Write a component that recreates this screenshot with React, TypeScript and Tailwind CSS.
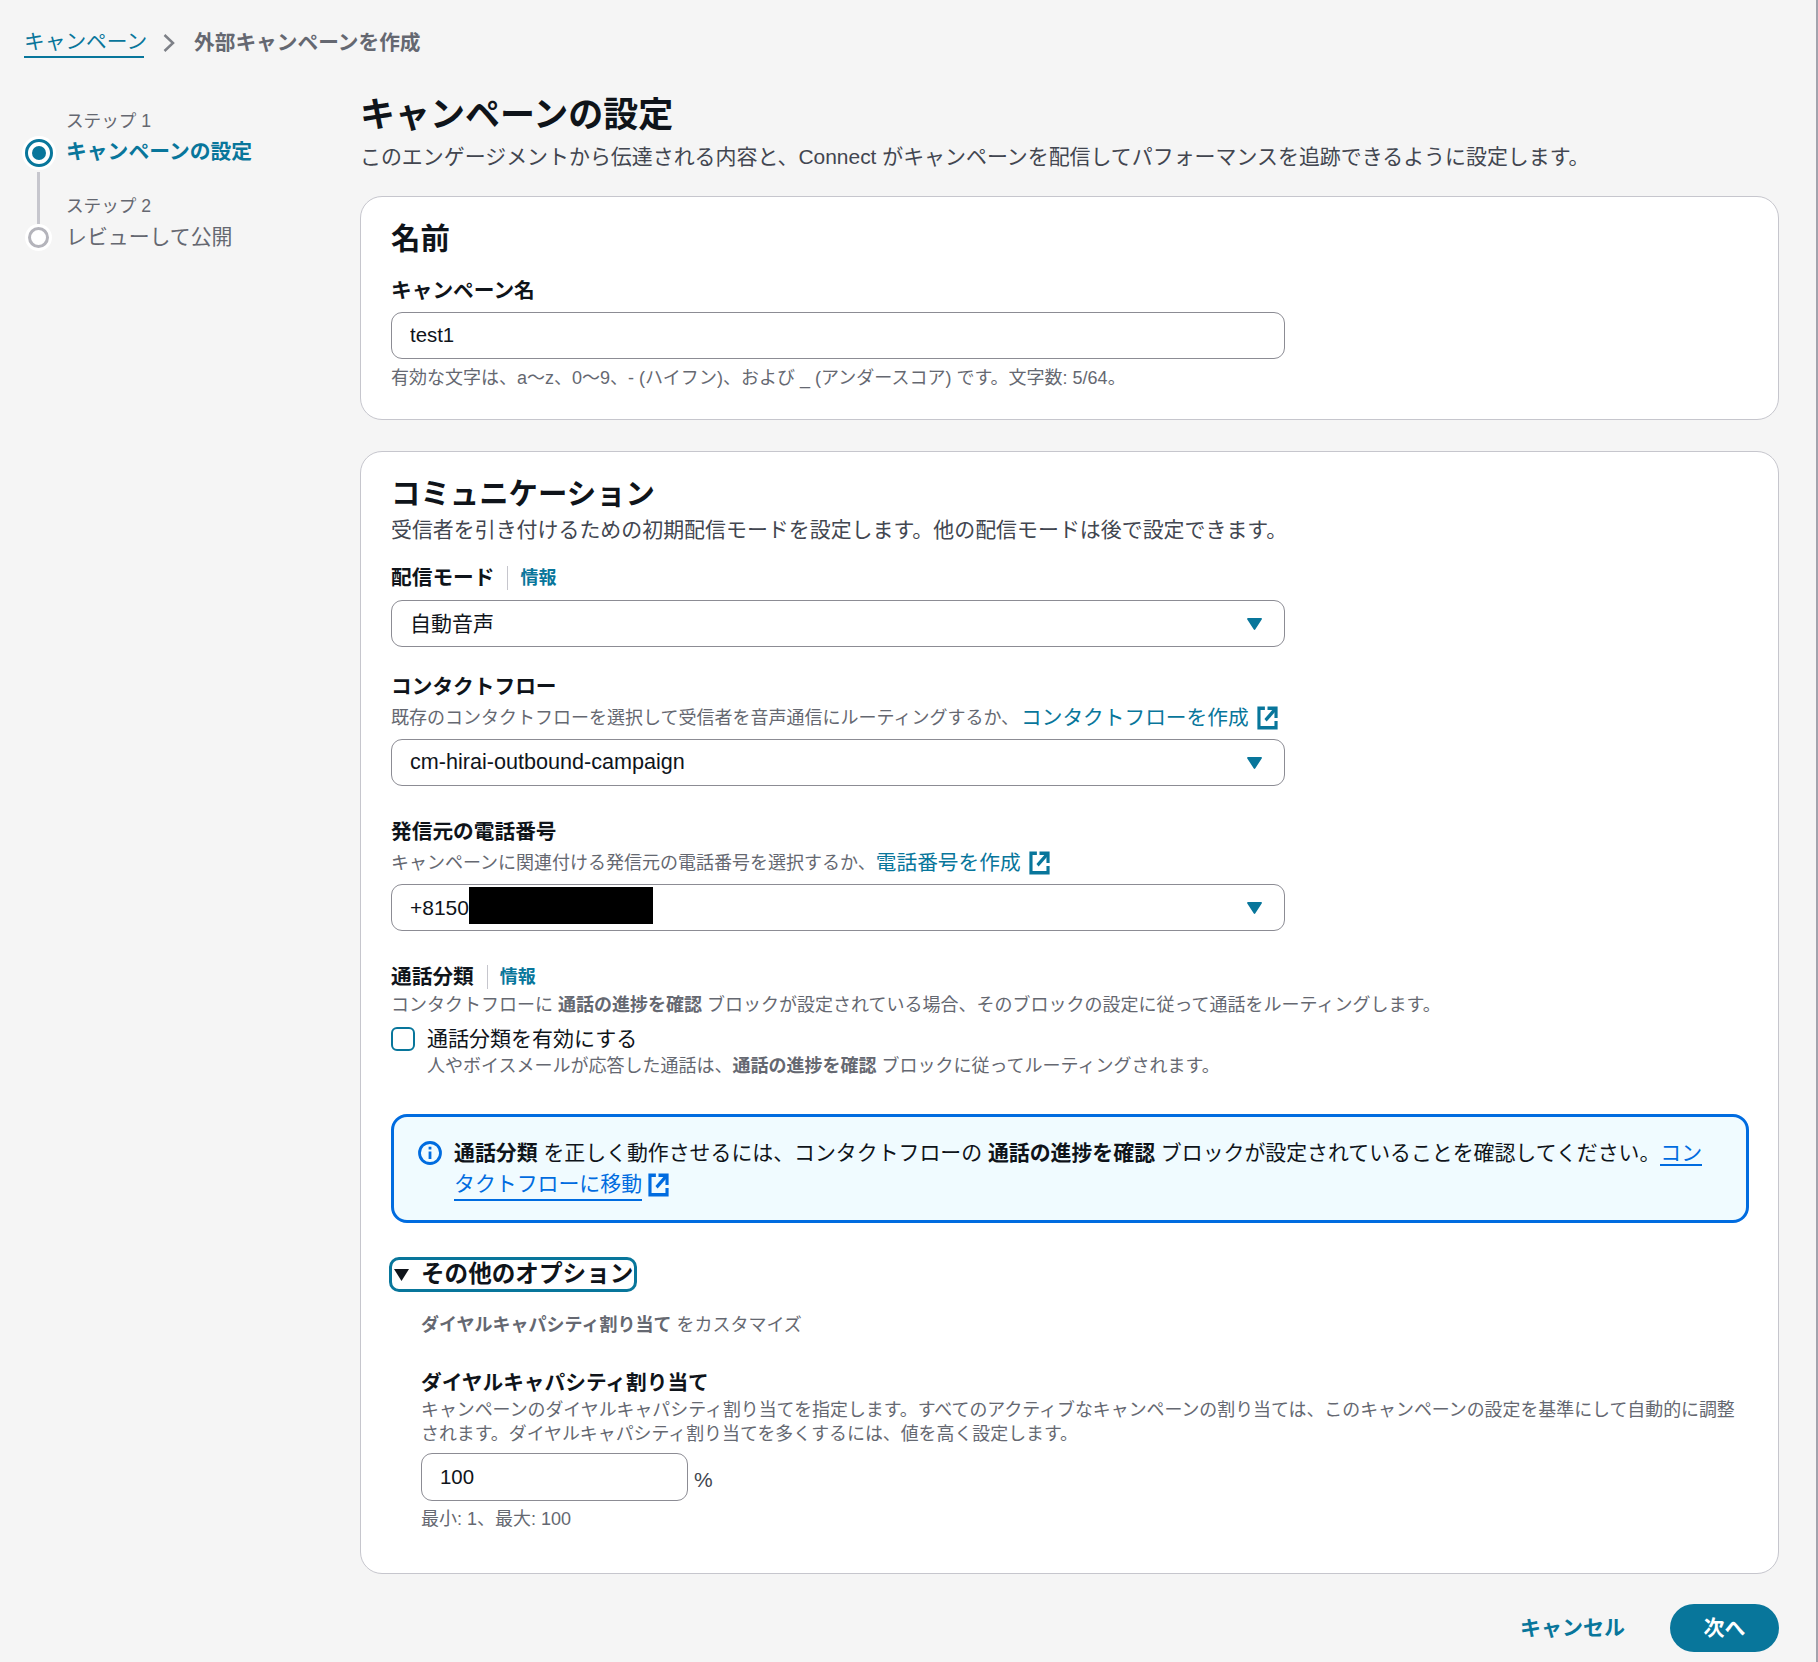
const font = { fontFamily: '"Liberation Sans", "Noto Sans CJK JP", sans-serif' }

function ExternalIcon({ className }: { className: string }) {
  return (
    <svg viewBox="0 0 16 16" preserveAspectRatio="none" fill="none" stroke="currentColor" strokeWidth="2.4" className={className}>
      <path d="M14.5 8V1.5H8" />
      <path d="M14 2 6.5 9.5" />
      <path d="M6 1.5H1.5v13h13V10" />
    </svg>
  )
}

function Caret() {
  return (
    <svg viewBox="0 0 15 12" className="h-3 w-[15px] fill-[#08769b]">
      <path d="M1 0h13c.8 0 1.2.9.7 1.5L8.2 11.5c-.4.5-1 .5-1.4 0L.3 1.5C-.2.9.2 0 1 0z" />
    </svg>
  )
}

function Select({ children }: { children: React.ReactNode }) {
  return (
    <div className="mt-[9px] flex h-[47px] w-[894px] items-center justify-between rounded-[11px] border border-[#8c8c94] bg-white pl-[18px] pr-[22px] text-[21px] text-[#0f141a]">
      <div className="flex items-center">{children}</div>
      <Caret />
    </div>
  )
}

function Label({ children, info, className }: { children: React.ReactNode; info?: boolean; className: string }) {
  return (
    <div className={`flex h-[26px] items-center text-[20.7px] font-bold leading-[26px] text-[#0f141a] ${className}`}>
      <span>{children}</span>
      {info && (
        <>
          <span className="ml-[13px] h-[24px] w-px bg-[#c6c6cd]" />
          <span className="ml-[12px] text-[18px] text-[#08769b]">情報</span>
        </>
      )}
    </div>
  )
}

function Help({ children, className }: { children: React.ReactNode; className: string }) {
  return <div className={`text-[18px] text-[#656871] ${className}`}>{children}</div>
}

export default function App() {
  return (
    <div style={font} className="min-h-[1662px] border-r-2 border-[#a3a3ad] bg-[#f5f5f5] pb-[9px]">
      <div className="flex h-[57px] items-end pl-[24px]">
        <div className="flex h-[28px] items-center whitespace-nowrap text-[20.7px] leading-[28px]">
          <span className="w-[120px] border-b-2 border-[#08769b] text-[#08769b]">キャンペーン</span>
          <svg viewBox="0 0 12 18" fill="none" stroke="#7d8087" strokeWidth="2.5" className="ml-[19px] h-[18px] w-[12px]">
            <path d="M1.5 1 10 9l-8.5 8" />
          </svg>
          <span className="ml-[19px] font-bold text-[#656871]">外部キャンペーンを作成</span>
        </div>
      </div>

      <div className="flex">
        <aside className="w-[360px] shrink-0 pl-[24px]">
          <div className="mt-[52px] flex">
            <div className="flex w-[29px] flex-col items-center">
              <div className="mt-[30px] flex h-[28px] w-[28px] items-center justify-center rounded-full border-[3px] border-[#08769b] bg-white ring-[3px] ring-white">
                <div className="h-[14px] w-[14px] rounded-full bg-[#08769b]" />
              </div>
              <div className="mt-[5px] h-[52px] w-[3px] bg-[#c6c6cd]" />
              <div className="mt-[3px] h-[21px] w-[21px] rounded-full border-[3px] border-[#b4b4bb] bg-white ring-[3px] ring-white" />
            </div>
            <div className="ml-[13px] flex flex-col">
              <span className="text-[17.6px] leading-[24px] text-[#656871]">ステップ 1</span>
              <span className="mt-[6px] text-[20.8px] font-bold leading-[26px] text-[#08769b]">キャンペーンの設定</span>
              <span className="mt-[29px] text-[17.6px] leading-[24px] text-[#656871]">ステップ 2</span>
              <span className="mt-[6px] text-[20.9px] leading-[26px] text-[#656871]">レビューして公開</span>
            </div>
          </div>
        </aside>

        <main className="w-[1419px]">
          <h1 className="mt-[38px] text-[35px] font-bold leading-[40px] text-[#0f141a]">キャンペーンの設定</h1>
          <p className="mt-[8px] text-[20.95px] leading-[28px] text-[#424650]">
            このエンゲージメントから伝達される内容と、Connect がキャンペーンを配信してパフォーマンスを追跡できるように設定します。
          </p>

          <section className="mt-[25px] rounded-[22px] border border-[#c6c6cd] bg-white pl-[30px] pr-[30px] pt-[23px] pb-[30px]">
            <h2 className="text-[29.4px] font-bold leading-[38px] text-[#0f141a]">名前</h2>
            <Label className="mt-[20px]">キャンペーン名</Label>
            <input
              readOnly
              value="test1"
              className="mt-[8px] block h-[47px] w-[894px] rounded-[11px] border border-[#8c8c94] bg-white px-[18px] text-[20.4px] text-[#0f141a]"
            />
            <Help className="mt-[8px] leading-[22px]">有効な文字は、a〜z、0〜9、- (ハイフン)、および _ (アンダースコア) です。文字数: 5/64。</Help>
          </section>

          <section className="mt-[31px] rounded-[22px] border border-[#c6c6cd] bg-white pl-[30px] pr-[30px] pt-[23px] pb-[43px]">
            <h2 className="text-[29.4px] font-bold leading-[38px] text-[#0f141a]">コミュニケーション</h2>
            <p className="mt-[3px] text-[20.95px] leading-[28px] text-[#424650]">受信者を引き付けるための初期配信モードを設定します。他の配信モードは後で設定できます。</p>

            <Label info className="mt-[21px]">配信モード</Label>
            <Select>自動音声</Select>

            <Label className="mt-[27px]">コンタクトフロー</Label>
            <Help className="mt-[6px] flex items-center leading-[24px]">
              既存のコンタクトフローを選択して受信者を音声通信にルーティングするか、
              <span className="ml-[2px] flex items-center text-[20.7px] text-[#08769b]">
                コンタクトフローを作成
                <ExternalIcon className="ml-[8px] h-[24px] w-[21px]" />
              </span>
            </Help>
            <Select><span className="text-[21.6px]">cm-hirai-outbound-campaign</span></Select>

            <Label className="mt-[33px]">発信元の電話番号</Label>
            <Help className="mt-[6px] flex items-center leading-[24px]">
              キャンペーンに関連付ける発信元の電話番号を選択するか、
              <span className="flex items-center text-[20.7px] text-[#08769b]">
                電話番号を作成
                <ExternalIcon className="ml-[8px] h-[24px] w-[21px]" />
              </span>
            </Help>
            <Select>
              +8150
              <span className="mb-[4px] h-[37px] w-[184px] bg-black" />
            </Select>

            <Label info className="mt-[33px]">通話分類</Label>
            <Help className="mt-[4px] leading-[22px]">
              コンタクトフローに <b>通話の進捗を確認</b> ブロックが設定されている場合、そのブロックの設定に従って通話をルーティングします。
            </Help>
            <div className="mt-[10px] flex h-[26px] items-center">
              <span className="h-[24px] w-[24px] rounded-[6px] border-2 border-[#08769b] bg-white" />
              <span className="ml-[12px] text-[21px] leading-[26px] text-[#0f141a]">通話分類を有効にする</span>
            </div>
            <Help className="mt-[3px] pl-[36px] leading-[22px]">
              人やボイスメールが応答した通話は、<b>通話の進捗を確認</b> ブロックに従ってルーティングされます。
            </Help>

            <div className="mt-[37px] mr-[-1px] flex rounded-[16px] border-[3px] border-[#006ce0] bg-[#f0fbff] pb-[19px] pl-[24px] pr-[28px] pt-[20px] text-[20.9px] leading-[31px] text-[#0f141a]">
              <svg viewBox="0 0 24 24" fill="none" stroke="#006ce0" strokeWidth="2.8" className="mt-[4px] h-[24px] w-[24px] shrink-0">
                <circle cx="12" cy="12" r="10.5" />
                <path d="M12 10.5V18M12 5.8v2.8" />
              </svg>
              <p className="ml-[12px]">
                <b>通話分類</b> を正しく動作させるには、コンタクトフローの <b>通話の進捗を確認</b> ブロックが設定されていることを確認してください。
                <span className="border-b-2 border-[#006ce0] text-[#006ce0]">コン</span>
                <br />
                <span className="inline-flex items-center text-[#006ce0]">
                  <span className="border-b-2 border-[#006ce0]">タクトフローに移動</span>
                  <ExternalIcon className="ml-[6px] h-[24px] w-[21px]" />
                </span>
              </p>
            </div>

            <div className="mt-[34px] ml-[-2px] flex h-[35px] w-[248px] items-center rounded-[10px] border-[3px] border-[#08769b] pl-[2px]">
              <svg viewBox="0 0 15 12" className="h-[12px] w-[15px] shrink-0 fill-[#0f141a]">
                <path d="M0 0h15L7.5 12z" />
              </svg>
              <span className="ml-[12px] whitespace-nowrap text-[23.6px] font-bold leading-[29px] text-[#0f141a]">その他のオプション</span>
            </div>

            <div className="pl-[30px]">
              <Help className="mt-[21px] leading-[24px]"><b>ダイヤルキャパシティ割り当て</b> をカスタマイズ</Help>
              <Label className="mt-[33px]">ダイヤルキャパシティ割り当て</Label>
              <div className="mt-[2px] text-[17.92px] leading-[24px] text-[#656871]">
                キャンペーンのダイヤルキャパシティ割り当てを指定します。すべてのアクティブなキャンペーンの割り当ては、このキャンペーンの設定を基準にして自動的に調整されます。ダイヤルキャパシティ割り当てを多くするには、値を高く設定します。
              </div>
              <div className="mt-[7px] flex items-center">
                <input
                  readOnly
                  value="100"
                  className="block h-[48px] w-[267px] rounded-[11px] border border-[#8c8c94] bg-white px-[18px] text-[20.4px] text-[#0f141a]"
                />
                <span className="ml-[6px] mt-[6px] text-[21px] text-[#424650]">%</span>
              </div>
              <Help className="mt-[7px] leading-[22px]">最小: 1、最大: 100</Help>
            </div>
          </section>

          <div className="mt-[30px] flex items-center justify-end">
            <span className="text-[21px] font-bold text-[#08769b]">キャンセル</span>
            <span className="ml-[45px] flex h-[48px] w-[109px] items-center justify-center rounded-full bg-[#08769b] text-[21px] font-bold text-white">次へ</span>
          </div>
        </main>
      </div>
    </div>
  )
}
